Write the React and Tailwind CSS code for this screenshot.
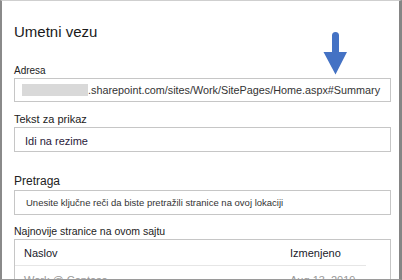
export default function App() {
  return (
    <div
      className="relative w-[402px] h-[280px] overflow-hidden bg-white border-t border-t-[#cfcfcf] border-b border-b-[#9a9a9a] border-l-2 border-l-[#8a8a8a] border-r-[3px] border-r-[#858585] text-[#222]"
      style={{ fontFamily: '"Liberation Sans", Arial, sans-serif' }}
    >
      <div className="pl-[12px] pr-[8px]">
        {/* Title */}
        <div className="mt-[21px] h-[20px] text-[15px] leading-[20px] text-[#1a1a1a]">
          Umetni vezu
        </div>

        {/* Adresa */}
        <div className="mt-[22px] h-[14px] text-[10px] leading-[14px]">Adresa</div>
        <div className="h-[24px] border border-[#c6c6c6] flex items-center pl-[7px] text-[10.8px] text-[#333] whitespace-nowrap">
          <span className="inline-block w-[66px] h-[12px] bg-[#d9d9d9]" />
          <span>.sharepoint.com/sites/Work/SitePages/Home.aspx#Summary</span>
        </div>

        {/* Tekst za prikaz */}
        <div className="mt-[9px] h-[16px] text-[11px] leading-[16px]">Tekst za prikaz</div>
        <div className="h-[25px] border border-[#c6c6c6] flex items-center pl-[10px] pt-[3px] text-[11px] text-[#2a1a3a]">
          Idi na rezime
        </div>

        {/* Pretraga */}
        <div className="mt-[20px] h-[18px] text-[12px] leading-[18px]">Pretraga</div>
        <div className="h-[25px] border border-[#c6c6c6] flex items-center pl-[11px] pt-[1px] text-[9.5px] text-[#333] whitespace-nowrap">
          Unesite ključne reči da biste pretražili stranice na ovoj lokaciji
        </div>

        {/* Najnovije stranice */}
        <div className="mt-[9px] h-[15px] text-[10.5px] leading-[15px]">
          Najnovije stranice na ovom sajtu
        </div>
        <div className="border border-[#c6c6c6] h-[60px]">
          <div className="flex h-[26px] items-end pb-[4px] mr-[24px] border-b border-[#e6e6e6] text-[11px] text-[#1a1a2a]">
            <div className="pl-[9px] w-[275px]">Naslov</div>
            <div>Izmenjeno</div>
          </div>
          <div className="flex pt-[6px] text-[11px] text-[#9a9a9a]">
            <div className="pl-[9px] w-[275px]">Work @ Contoso</div>
            <div>Aug 13, 2019</div>
          </div>
        </div>
      </div>

      {/* Arrow */}
      <svg
        className="absolute left-[319px] top-[30px]"
        width="28"
        height="45"
        viewBox="0 0 28 45"
      >
        <path d="M11 4.5 A3.5 3.5 0 0 1 18 4.5 V21 H26 L14.5 43.5 L2.5 21 H11 Z" fill="#4472c4" />
      </svg>
    </div>
  );
}
